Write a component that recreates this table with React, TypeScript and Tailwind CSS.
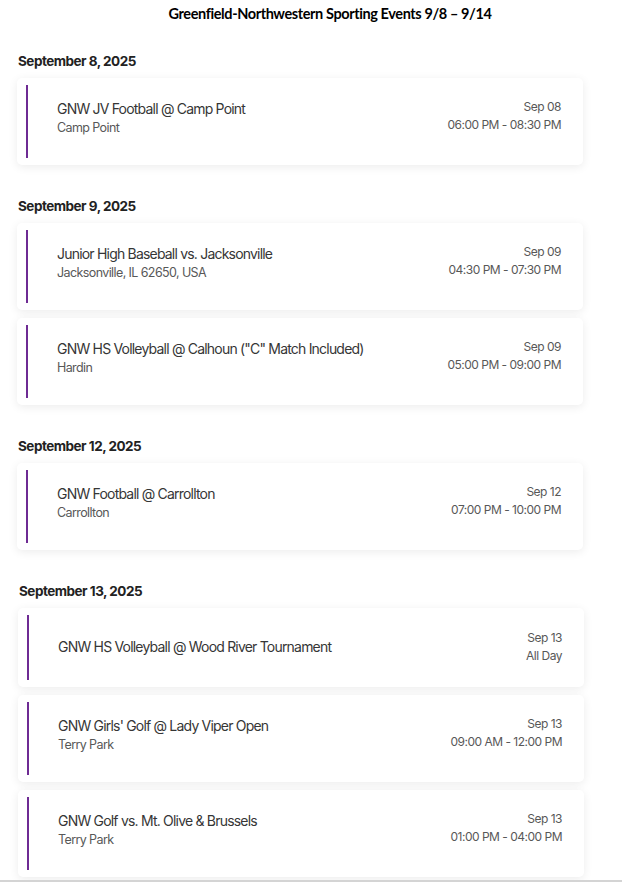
import React from "react";

type Ev = { title: string; place?: string; date: string; time: string };
type Sec = { head: string; events: Ev[]; shift?: boolean };

const sections: Sec[] = [
  {
    head: "September 8, 2025",
    events: [{ title: "GNW JV Football @ Camp Point", place: "Camp Point", date: "Sep 08", time: "06:00 PM - 08:30 PM" }],
  },
  {
    head: "September 9, 2025",
    events: [
      { title: "Junior High Baseball vs. Jacksonville", place: "Jacksonville, IL 62650, USA", date: "Sep 09", time: "04:30 PM - 07:30 PM" },
      { title: 'GNW HS Volleyball @ Calhoun ("C" Match Included)', place: "Hardin", date: "Sep 09", time: "05:00 PM - 09:00 PM" },
    ],
  },
  {
    head: "September 12, 2025",
    events: [{ title: "GNW Football @ Carrollton", place: "Carrollton", date: "Sep 12", time: "07:00 PM - 10:00 PM" }],
  },
  {
    head: "September 13, 2025",
    shift: true,
    events: [
      { title: "GNW HS Volleyball @ Wood River Tournament", date: "Sep 13", time: "All Day" },
      { title: "GNW Girls' Golf @ Lady Viper Open", place: "Terry Park", date: "Sep 13", time: "09:00 AM - 12:00 PM" },
      { title: "GNW Golf vs. Mt. Olive & Brussels", place: "Terry Park", date: "Sep 13", time: "01:00 PM - 04:00 PM" },
    ],
  },
];

function Card({ ev }: { ev: Ev }) {
  const hasPlace = !!ev.place;
  return (
    <div className="flex rounded-[5px] bg-white pl-[9px] pr-[22px] py-[7px] shadow-[0_2px_10px_rgba(0,0,0,0.08)]">
      <div className="w-[2px] shrink-0 bg-[#6e2b93]" />
      <div
        className={
          hasPlace
            ? "ml-[29px] flex flex-1 items-start justify-between pt-[14px] pb-[21px]"
            : "ml-[29px] flex flex-1 items-center justify-between pt-[14px] pb-[15px]"
        }
      >
        <div className="flex flex-col">
          <div className="text-[14px] leading-[20px] tracking-[-0.8px] text-[#363636]">{ev.title}</div>
          {hasPlace && <div className="text-[12.5px] leading-[18px] tracking-[-0.6px] text-[#585858]">{ev.place}</div>}
        </div>
        <div className={hasPlace ? "-mt-px flex flex-col items-end" : "flex flex-col items-end"}>
          <div className="text-[12px] leading-[18px] tracking-[-0.5px] text-[#585858]">{ev.date}</div>
          <div className="text-[12px] leading-[18px] tracking-[-0.5px] text-[#585858]">{ev.time}</div>
        </div>
      </div>
    </div>
  );
}

export default function App() {
  return (
    <div className="relative h-[883px] w-[622px] overflow-hidden bg-white font-['Inter',sans-serif]">
      <div className="pt-[5px] pl-[38px] text-center font-['Lato','Liberation_Sans',sans-serif] text-[14.5px] font-bold leading-[18px] tracking-[-0.4px] text-black">
        Greenfield-Northwestern Sporting Events 9/8 – 9/14
      </div>
      <div className="mt-[30px] flex flex-col gap-[33px] pl-[17px] pr-[39px]">
        {sections.map((s) => (
          <div key={s.head} className={s.shift ? "flex flex-col pl-[1px] -mr-[1px]" : "flex flex-col"}>
            <div className="mb-[9px] pl-[1px] text-[13.5px] font-bold leading-[16px] tracking-[-0.5px] text-[#222222]">{s.head}</div>
            <div className="flex flex-col gap-[8px]">
              {s.events.map((e) => (
                <Card key={e.title} ev={e} />
              ))}
            </div>
          </div>
        ))}
      </div>
      <div className="absolute bottom-0 left-0 h-[3px] w-full border-t-2 border-[#d4d4d4] bg-white" />
    </div>
  );
}
